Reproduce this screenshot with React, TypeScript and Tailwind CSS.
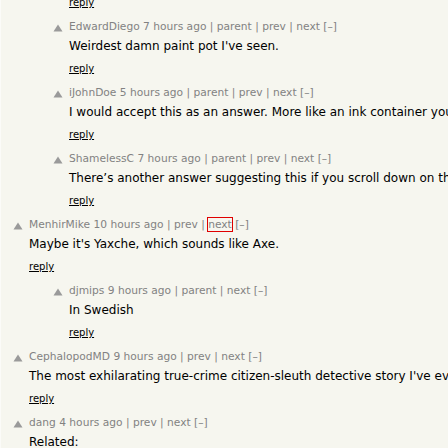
import React from "react";

type Comment = {
  user: string;
  age: string;
  links: string[]; // parent / prev / next
  text: string;
  depth: 0 | 1;
  boxed?: string; // link that has the red focus box
};

const COMMENTS: Comment[] = [
  {
    user: "EdwardDiego",
    age: "7 hours ago",
    links: ["parent", "prev", "next"],
    text: "Weirdest damn paint pot I've seen.",
    depth: 1,
  },
  {
    user: "iJohnDoe",
    age: "5 hours ago",
    links: ["parent", "prev", "next"],
    text: "I would accept this as an answer. More like an ink container you'd find on an old desk.",
    depth: 1,
  },
  {
    user: "ShamelessC",
    age: "7 hours ago",
    links: ["parent", "prev", "next"],
    text: "There\u2019s another answer suggesting this if you scroll down on the page.",
    depth: 1,
  },
  {
    user: "MenhirMike",
    age: "10 hours ago",
    links: ["prev", "next"],
    text: "Maybe it's Yaxche, which sounds like Axe.",
    depth: 0,
    boxed: "next",
  },
  {
    user: "djmips",
    age: "9 hours ago",
    links: ["parent", "next"],
    text: "In Swedish",
    depth: 1,
  },
  {
    user: "CephalopodMD",
    age: "9 hours ago",
    links: ["prev", "next"],
    text: "The most exhilarating true-crime citizen-sleuth detective story I've ever read.",
    depth: 0,
  },
  {
    user: "dang",
    age: "4 hours ago",
    links: ["prev", "next"],
    text: "Related:",
    depth: 0,
  },
];

function VoteArrow() {
  return (
    <svg width="10" height="10" viewBox="0 0 10 10" className="mt-[3px] ml-[1px]" aria-hidden>
      <polygon points="5,1.5 9.5,8.5 0.5,8.5" fill="#9a9a9a" />
    </svg>
  );
}

function Reply() {
  return (
    <div className="text-[10px] leading-[14px] text-black">
      <u>reply</u>
    </div>
  );
}

function CommentRow({ c }: { c: Comment }) {
  return (
    <div className="flex pb-[10px]">
      {c.depth === 1 && <div className="w-[40px] shrink-0" />}
      <div className="w-[17px] shrink-0">
        <VoteArrow />
      </div>
      <div className="min-w-0 flex-1">
        <div className="whitespace-nowrap text-[10.67px] leading-[14px] text-[#828282]">
          {c.user} {c.age}
          {c.links.map((l) => (
            <React.Fragment key={l}>
              {" | "}
              <span className={c.boxed === l ? "outline outline-[#e00000]" : ""}>{l}</span>
            </React.Fragment>
          ))}{" "}
          [–]
        </div>
        <div className="mt-[4px] whitespace-nowrap text-[12px] leading-[17px] text-black">{c.text}</div>
        <div className="mt-[7px]">
          <Reply />
        </div>
      </div>
    </div>
  );
}

export default function App() {
  return (
    <div
      className="h-[448px] w-[448px] overflow-hidden border-l border-[#fbfbf8] bg-[#f6f6ef] pl-[11px]"
      style={{ fontFamily: '"DejaVu Sans", Verdana, sans-serif' }}
    >
      {/* tail of the comment above, scrolled mostly out of view */}
      <div className="mt-[-4px] flex pb-[10px] pl-[57px]">
        <Reply />
      </div>
      {COMMENTS.map((c) => (
        <CommentRow key={c.user} c={c} />
      ))}
    </div>
  );
}
